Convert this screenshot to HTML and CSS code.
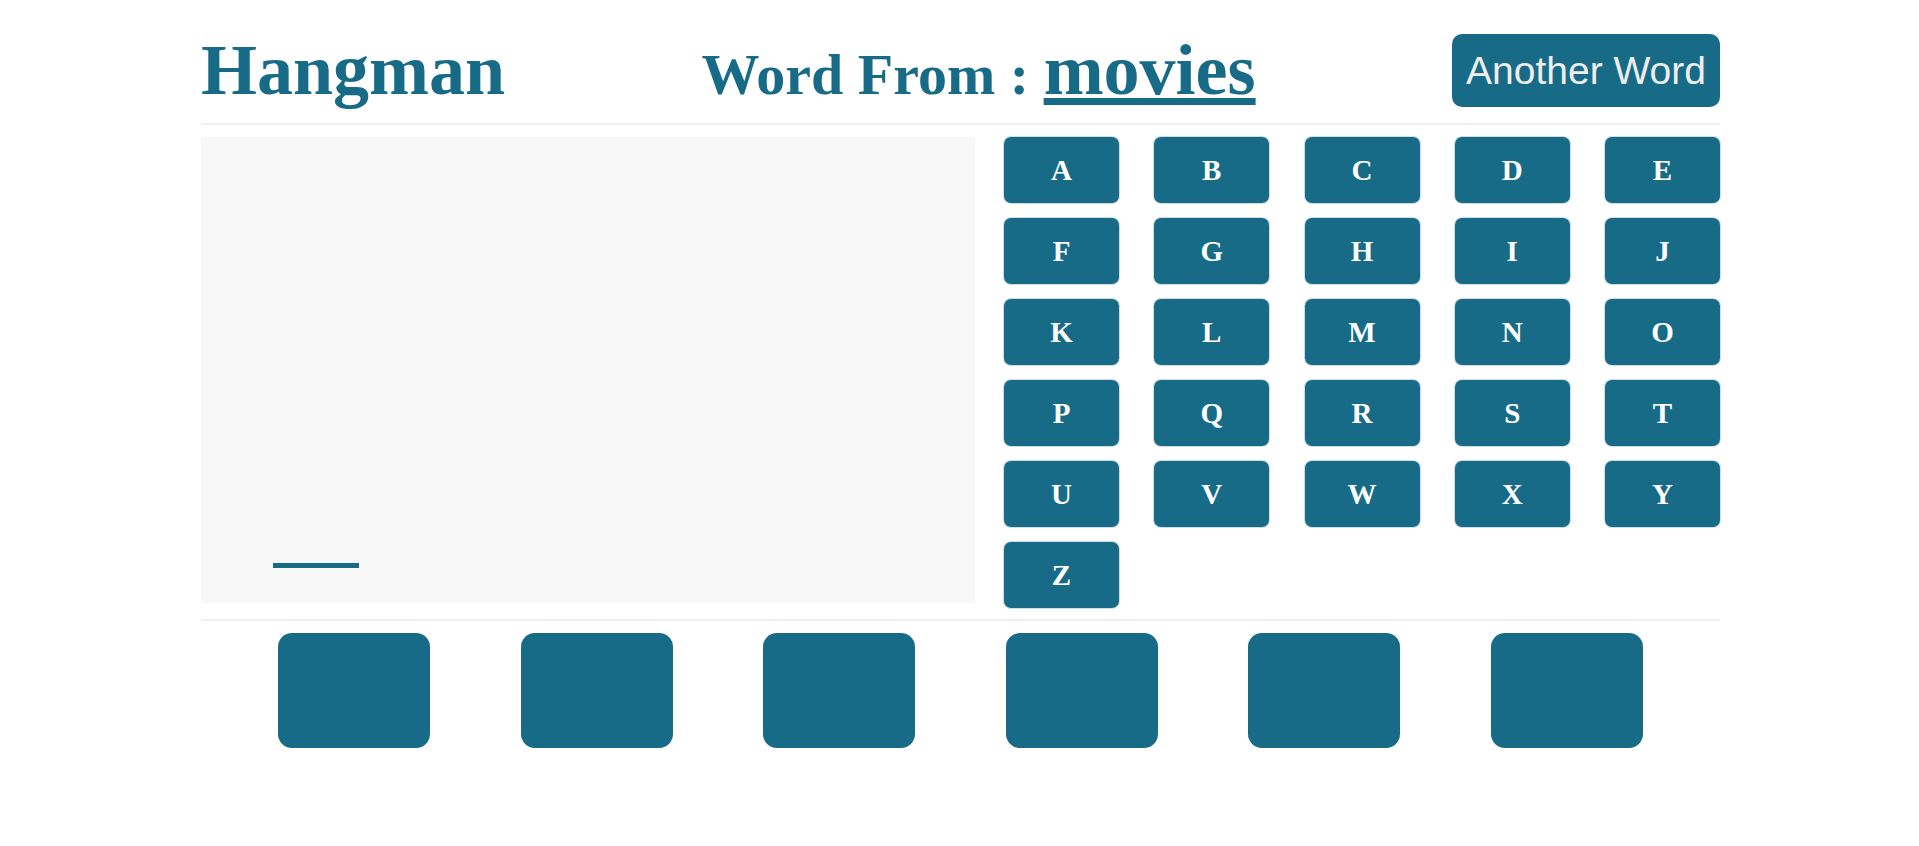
FILE: index.html
```
<!DOCTYPE html>
<html lang="en">
<head>
<meta charset="utf-8">
<title>Hangman</title>
<link rel="stylesheet" href="styles.css">
</head>
<body>
<div class="container">
  <header class="game-info">
    <h1 class="game-name">Hangman</h1>
    <h2 class="category">Word From : <span class="category-name">movies</span></h2>
    <button class="another" type="button">Another Word</button>
  </header>
  <main class="play">
    <svg class="drawing" viewBox="0 0 774 466" role="img" aria-label="Hangman drawing">
      <rect class="stroke" x="72" y="426" width="86" height="5" shape-rendering="crispEdges"/>
    </svg>
    <div class="letters">
      <button class="letter" type="button">A</button>
      <button class="letter" type="button">B</button>
      <button class="letter" type="button">C</button>
      <button class="letter" type="button">D</button>
      <button class="letter" type="button">E</button>
      <button class="letter" type="button">F</button>
      <button class="letter" type="button">G</button>
      <button class="letter" type="button">H</button>
      <button class="letter" type="button">I</button>
      <button class="letter" type="button">J</button>
      <button class="letter" type="button">K</button>
      <button class="letter" type="button">L</button>
      <button class="letter" type="button">M</button>
      <button class="letter" type="button">N</button>
      <button class="letter" type="button">O</button>
      <button class="letter" type="button">P</button>
      <button class="letter" type="button">Q</button>
      <button class="letter" type="button">R</button>
      <button class="letter" type="button">S</button>
      <button class="letter" type="button">T</button>
      <button class="letter" type="button">U</button>
      <button class="letter" type="button">V</button>
      <button class="letter" type="button">W</button>
      <button class="letter" type="button">X</button>
      <button class="letter" type="button">Y</button>
      <button class="letter" type="button">Z</button>
    </div>
  </main>
  <section class="guess" aria-label="Word to guess">
    <span class="slot"></span>
    <span class="slot"></span>
    <span class="slot"></span>
    <span class="slot"></span>
    <span class="slot"></span>
    <span class="slot"></span>
  </section>
</div>
</body>
</html>
```
FILE: styles.css
```
* {
  box-sizing: border-box;
}

:root {
  --main: #186b87;
  --line: #eee;
}

body {
  margin: 0;
  background: #fff;
  color: var(--main);
  font-family: "Liberation Serif", "Times New Roman", serif;
}

.container {
  margin: 0 199px 0 201px;
}

.game-info {
  display: flex;
  justify-content: space-between;
  align-items: baseline;
  padding: 29px 0 11px;
  border-bottom: 2px solid var(--line);
}

.game-name,
.category {
  margin: 0;
  font-weight: bold;
}

.game-name {
  line-height: 83px;
}

.category {
  font-size: 58px;
  line-height: 72px;
}

.game-name,
.category-name {
  font-size: 72px;
}

.category-name {
  text-decoration: underline;
  text-decoration-thickness: 7px;
  text-underline-offset: 4px;
}

.another {
  align-self: center;
  padding: 14px;
  border: 0;
  border-radius: 10px;
  background: var(--main);
  color: var(--line);
  font-family: "Liberation Sans", Arial, sans-serif;
  font-size: 39px;
  line-height: 45px;
  cursor: pointer;
}

.play {
  display: grid;
  grid-template-columns: 774fr 716fr;
  gap: 29px;
  align-items: start;
  padding: 12px 0 11px;
  border-bottom: 2px solid var(--line);
}

.drawing {
  display: block;
  width: 100%;
  background: #f8f8f8;
}

.stroke {
  fill: var(--main);
}

.letters {
  display: grid;
  grid-template-columns: repeat(5, 115px);
  justify-content: space-between;
  row-gap: 15px;
}

.letter {
  padding: 16px 0;
  border: 0;
  border-radius: 7px;
  background: var(--main);
  box-shadow: 0 0 0 1px #cddde6;
  color: #fff;
  font-family: inherit;
  font-size: 29px;
  font-weight: bold;
  line-height: 34px;
  cursor: pointer;
}

.guess {
  display: flex;
  justify-content: space-between;
  padding: 12px 77px;
}

.slot {
  flex: 0 0 152px;
  height: 115px;
  border-radius: 14px;
  background: var(--main);
}
```
